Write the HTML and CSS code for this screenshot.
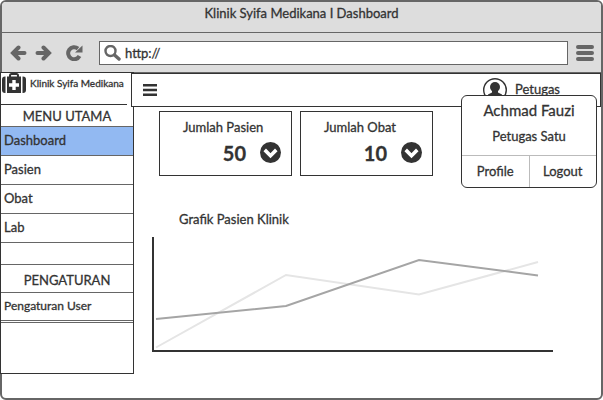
FILE: index.html
```html
<!DOCTYPE html>
<html lang="id">
<head>
<meta charset="utf-8">
<meta name="viewport" content="width=device-width, initial-scale=1">
<title>Klinik Syifa Medikana I Dashboard</title>
<link rel="stylesheet" href="styles.css">
</head>
<body>
<div class="window">
  <div class="titlebar">Klinik Syifa Medikana I Dashboard</div>
  <div class="toolbar">
    <button class="tool" type="button" aria-label="Back">
      <svg width="17" height="16" viewBox="0 0 17 16"><path d="M8.500 2.500 3 8l5.500 5.500M4 8h10.500" class="arrow"/></svg>
    </button>
    <button class="tool" type="button" aria-label="Forward">
      <svg width="17" height="16" viewBox="0 0 17 16"><path d="M8.500 2.500 14 8l-5.500 5.500M13 8H2.500" class="arrow"/></svg>
    </button>
    <button class="tool tool-reload" type="button" aria-label="Reload">
      <svg width="17" height="16" viewBox="0 0 17 16"><path d="M12 3.600A6 6 0 1 0 13.500 11" class="loop"/><path d="M16.500 .5V7.500H9z" fill="#666"/></svg>
    </button>
    <label class="address">
      <svg width="17" height="16" viewBox="0 0 17 16"><circle cx="6.500" cy="6" r="5" fill="none" stroke="#666" stroke-width="2.400"/><path d="M10.500 10l4.500 4" stroke="#666" stroke-width="3.400" stroke-linecap="round"/></svg>
      <input type="text" value="http://" aria-label="Address">
    </label>
    <button class="tool" type="button" aria-label="Browser menu">
      <svg width="18" height="16" viewBox="0 0 18 16"><path d="M2 2h14M2 8h14M2 14h14" stroke="#666" stroke-width="4" stroke-linecap="round"/></svg>
    </button>
  </div>

  <div class="content">
    <aside class="sidebar">
      <div class="brand">
        <svg width="24" height="21" viewBox="0 0 24 21"><path d="M8 4.500V2.500Q8 1 9.500 1h5Q16 1 16 2.500v2" fill="none" stroke="#333" stroke-width="2"/><path d="M5 3.500h14V20H5zM3.500 3.500V20H3a3 3 0 0 1-3-3V6.500a3 3 0 0 1 3-3zM20.500 3.500V20h.5a3 3 0 0 0 3-3V6.500a3 3 0 0 0-3-3z" fill="#333"/><path d="M12 7v10M7 12h10" stroke="#fff" stroke-width="3.400"/></svg>
        <span>Klinik Syifa Medikana</span>
      </div>
      <nav>
        <h2 class="menu-title">MENU UTAMA</h2>
        <ul class="menu">
          <li><a class="active" href="#dashboard">Dashboard</a></li>
          <li><a href="#pasien">Pasien</a></li>
          <li><a href="#obat">Obat</a></li>
          <li><a href="#lab">Lab</a></li>
          <li class="spacer"></li>
        </ul>
        <h2 class="menu-title menu-title-settings">PENGATURAN</h2>
        <ul class="menu menu-settings">
          <li><a href="#user">Pengaturan User</a></li>
          <li class="end"></li>
        </ul>
      </nav>
    </aside>

    <main class="main">
      <header class="header">
        <button class="plain" type="button" aria-label="Menu">
          <svg width="14" height="12" viewBox="0 0 14 12"><path d="M0 1.200h14M0 6h14M0 10.800h14" stroke="#333" stroke-width="2.400"/></svg>
        </button>
        <button class="plain user" type="button">
          <svg width="24" height="24" viewBox="0 0 24 24"><circle cx="12" cy="12" r="11.300" fill="none" stroke="#333" stroke-width="1.400"/><circle cx="12" cy="9" r="5" fill="#333"/><path d="M9 12h6v2.500l4 2v2A10 10 0 0 1 5 18.500v-2l4-2z" fill="#333"/></svg>
          <span>Petugas</span>
        </button>
        <div class="popup">
          <strong class="popup-name">Achmad Fauzi</strong>
          <span class="popup-role">Petugas Satu</span>
          <div class="popup-actions">
            <button type="button">Profile</button>
            <button type="button">Logout</button>
          </div>
        </div>
      </header>

      <div class="cards">
        <section class="card">
          <h3>Jumlah Pasien</h3>
          <div class="card-value">
            <b>50</b>
            <button class="plain" type="button" aria-label="Detail pasien"><svg width="21" height="21" viewBox="0 0 20 20"><circle cx="10" cy="10" r="10" fill="#333"/><path d="M4.500 7.500 10 13l5.500-5.500" fill="none" stroke="#fff" stroke-width="3.400"/></svg></button>
          </div>
        </section>
        <section class="card">
          <h3>Jumlah Obat</h3>
          <div class="card-value">
            <b>10</b>
            <button class="plain" type="button" aria-label="Detail obat"><svg width="21" height="21" viewBox="0 0 20 20"><circle cx="10" cy="10" r="10" fill="#333"/><path d="M4.500 7.500 10 13l5.500-5.500" fill="none" stroke="#fff" stroke-width="3.400"/></svg></button>
          </div>
        </section>
      </div>

      <section class="report">
        <h3>Grafik Pasien Klinik</h3>
        <svg class="chart" viewBox="0 0 401 115" role="img" aria-label="Grafik Pasien Klinik">
          <path d="M4 110.500 134 38l133 19.500L386 25" fill="none" stroke="#e5e5e5" stroke-width="2"/>
          <path d="M4 82l130-13L267 23l119 15.500" fill="none" stroke="#a5a5a5" stroke-width="2"/>
          <path d="M1 0v114h400" fill="none" stroke="#333" stroke-width="2"/>
        </svg>
      </section>
    </main>
  </div>
</div>
</body>
</html>
```

FILE: styles.css
```css
* {
  box-sizing: border-box;
}

body {
  margin: 0;
  background: #fff;
  color: #333;
  font: 13px/18px Lato, "Open Sans", sans-serif;
  -webkit-text-stroke: 0.3px;
}

h2, h3, ul {
  margin: 0;
  padding: 0;
  font-size: inherit;
  font-weight: 400;
  list-style: none;
}

button, input {
  margin: 0;
  padding: 0;
  border: 0;
  background: none;
  color: inherit;
  font: inherit;
}

svg {
  display: block;
  flex: none;
}

.window {
  display: flex;
  flex-direction: column;
  min-height: 100vh;
  border: 2px solid #666;
  border-radius: 6px;
}

.titlebar {
  height: 31px;
  padding-top: 2px;
  border-bottom: 1px solid #666;
  border-radius: 4px 4px 0 0;
  background: #ddd;
  text-align: center;
}

.toolbar {
  display: flex;
  align-items: center;
  gap: 8px;
  height: 40px;
  padding: 0 7px 0 8px;
  border-bottom: 1px solid #666;
  background: #ddd;
}

.tool-reload {
  margin: 0 8px 0 6px;
}

.arrow {
  fill: none;
  stroke: #666;
  stroke-width: 4;
  stroke-linecap: round;
}

.loop {
  fill: none;
  stroke: #666;
  stroke-width: 4;
}

.address {
  display: flex;
  flex: 1;
  align-items: center;
  gap: 4px;
  height: 24px;
  padding: 0 4px;
  border: 1px solid #666;
  background: #fff;
}

.address input {
  flex: 1;
  min-width: 0;
  outline: 0;
}

.content {
  display: flex;
  flex: 1;
  align-items: flex-start;
}

.sidebar {
  flex: 0 0 134px;
  min-height: 302px;
  margin: -1px 0 0 -2px;
  border: 1px solid #333;
  background: #fff;
}

.brand {
  display: flex;
  align-items: flex-start;
  gap: 4px;
  height: 32px;
  margin-right: 6px;
  border-bottom: 1px solid #333;
  padding-left: 1px;
  font-size: 10px;
  line-height: 20px;
  white-space: nowrap;
}

.menu-title {
  height: 21px;
  font-size: 13px;
  line-height: 22px;
  text-align: center;
}

.menu-title-settings {
  height: 27px;
  line-height: 30px;
}

.menu {
  border-top: 1px solid #666;
}

.menu li {
  border-bottom: 1px solid #666;
}

.menu a {
  display: block;
  height: 28px;
  padding-left: 3px;
  color: inherit;
  line-height: 26px;
  text-decoration: none;
}

.menu a.active {
  background: #92b9f2;
}

.menu .spacer {
  height: 22px;
}

.menu-settings a {
  height: 27px;
  font-size: 12px;
}

.menu .end {
  height: 2px;
}

.main {
  flex: 1;
  min-width: 0;
}

.header {
  position: relative;
  display: flex;
  align-items: center;
  justify-content: space-between;
  height: 34px;
  margin-left: -3px;
  padding: 0 40px 0 11px;
  border: 1px solid #333;
  background: #fff;
}

.user {
  display: flex;
  align-items: center;
  gap: 8px;
}

.user span {
  padding-bottom: 2px;
}

.popup {
  position: absolute;
  top: 21px;
  right: 3px;
  display: flex;
  flex-direction: column;
  width: 136px;
  border: 1px solid #333;
  border-radius: 6px;
  background: #fff;
  text-align: center;
}

.popup-name {
  padding-top: 5px;
  font-size: 15px;
  font-weight: 400;
}

.popup-role {
  padding: 8px 0 10px;
}

.popup-actions {
  display: flex;
  border-top: 1px solid #bbb;
}

.popup-actions button {
  flex: 1;
  height: 31px;
  padding-bottom: 2px;
}

.popup-actions button + button {
  border-left: 1px solid #bbb;
}

.cards {
  display: flex;
  gap: 8px;
  padding: 4px 25px 0;
}

.card {
  width: 133px;
  height: 65px;
  padding: 6px 10px 0 23px;
  border: 1px solid #333;
}

.card-value {
  display: flex;
  align-items: center;
  justify-content: flex-end;
  gap: 14px;
  padding-top: 6px;
  font-size: 20px;
  line-height: 20px;
}

.report {
  padding: 34px 48px 0 18px;
}

.report h3 {
  padding: 0 0 9px 27px;
}

.chart {
  width: 100%;
}
```
